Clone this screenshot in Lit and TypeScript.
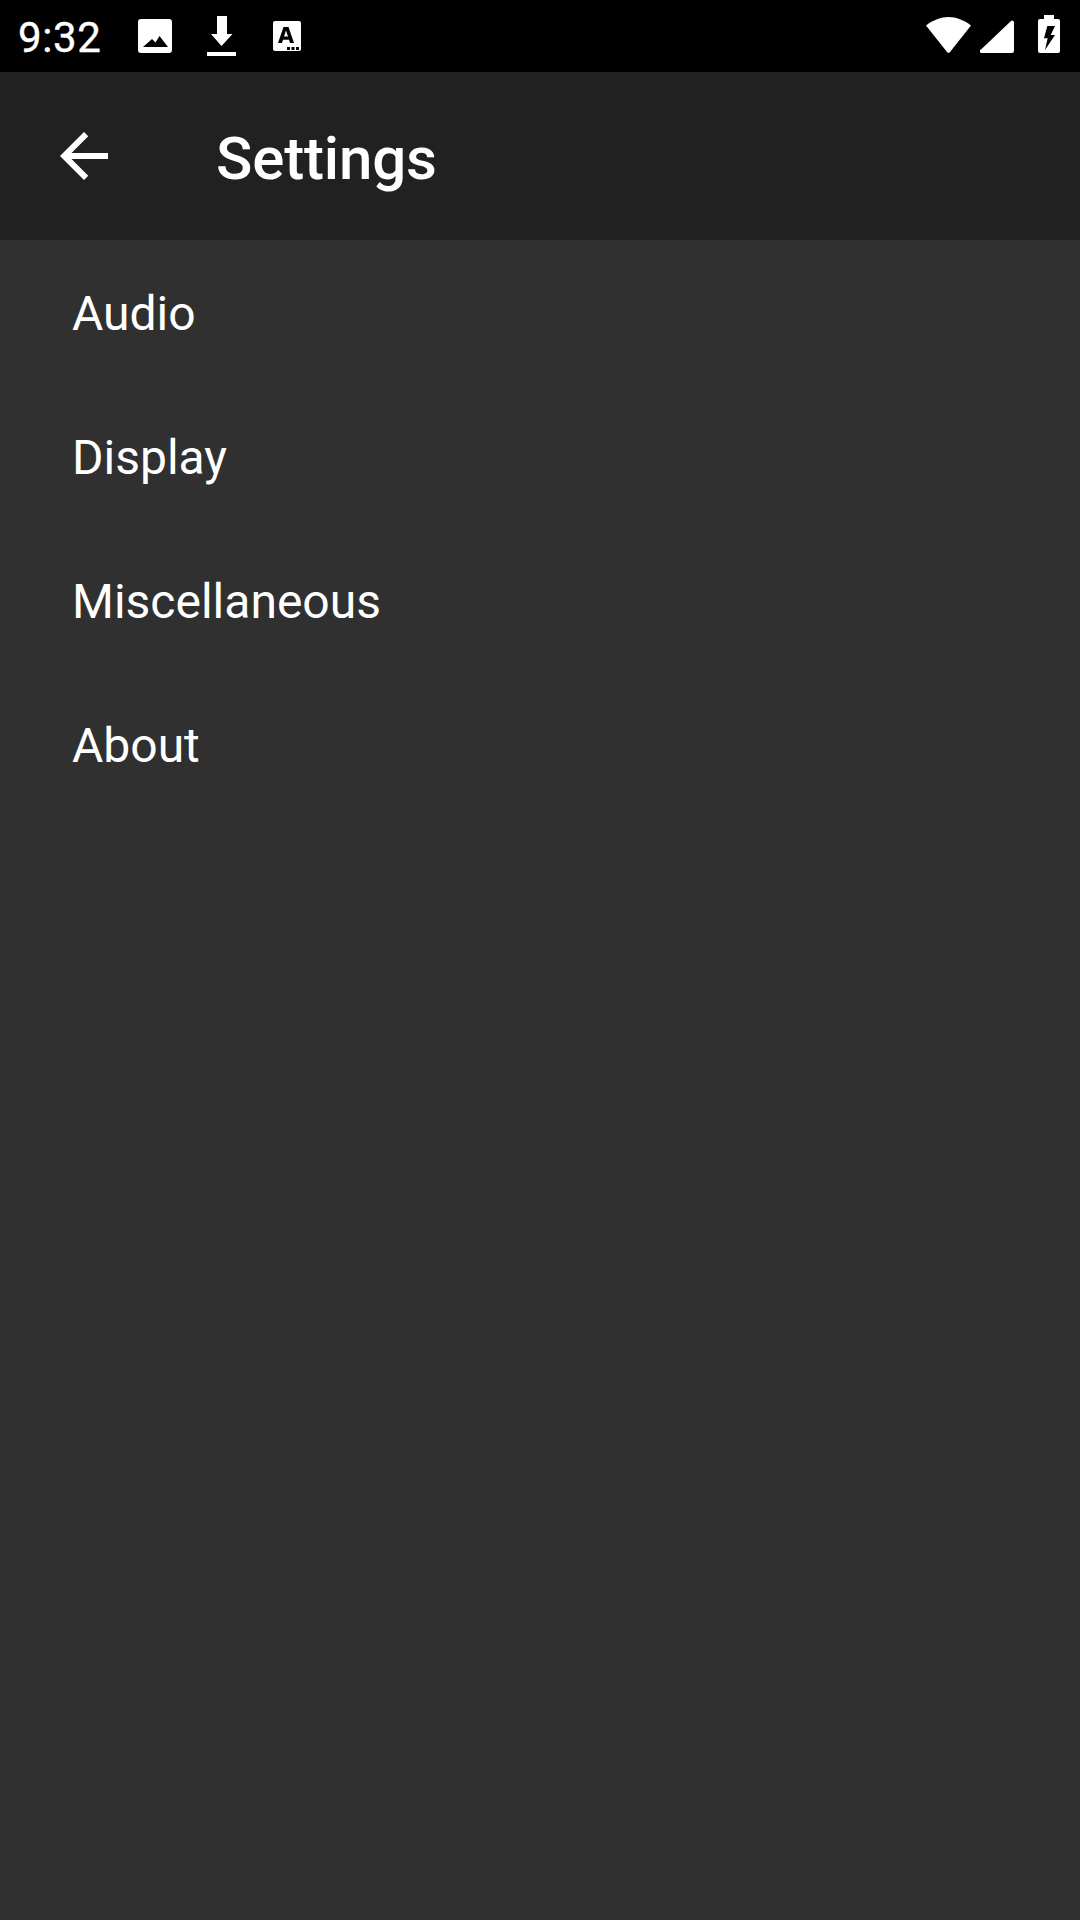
import { LitElement, html, css } from 'lit';
import { customElement } from 'lit/decorators.js';

const items = ['Audio', 'Display', 'Miscellaneous', 'About'];

@customElement('app-root')
export class AppRoot extends LitElement {
  static styles = css`
    :host {
      display: flex;
      flex-direction: column;
      height: 1920px;
      background: #303030;
      color: #fff;
      font-family: Roboto, sans-serif;
    }
    .status {
      height: 72px;
      background: #000;
      display: flex;
      align-items: center;
      flex: none;
    }
    .clock {
      font-size: 42px;
      margin-left: 18px;
      padding-top: 4px;
      width: 102px;
      line-height: 68px;
      letter-spacing: 0.6px;
      -webkit-text-stroke: 0.4px #fff;
    }
    .status svg {
      display: block;
      fill: #fff;
      flex: none;
    }
    .notif {
      display: flex;
      align-items: center;
    }
    .spacer {
      flex: 1;
    }
    .system {
      display: flex;
      align-items: center;
      margin-right: 4px;
    }
    .toolbar {
      height: 168px;
      background: #212121;
      display: flex;
      align-items: center;
      flex: none;
    }
    .back {
      margin-left: 48px;
      width: 72px;
      height: 72px;
      flex: none;
      fill: #fff;
    }
    .title {
      margin-left: 96px;
      padding-top: 5px;
      font-size: 60px;
      font-weight: 500;
      line-height: 72px;
      letter-spacing: -0.15px;
    }
    .row {
      height: 144px;
      box-sizing: border-box;
      padding: 2px 0 0 72px;
      display: flex;
      align-items: center;
      font-size: 48px;
    }
  `;

  render() {
    return html`
      <div class="status">
        <span class="clock">9:32</span>
        <div class="notif">
          <svg width="72" height="72" viewBox="0 0 72 72">
            <path fill-rule="evenodd" d="M21 19h28a3 3 0 0 1 3 3v28a3 3 0 0 1-3 3H21a3 3 0 0 1-3-3V22a3 3 0 0 1 3-3zM23 47l9-8 3.500 3.500L39.500 36 48 47z" />
          </svg>
          <svg width="60" height="72" viewBox="0 0 60 72">
            <path d="M25 16h10v18h5.500L29.500 46 19 34h6zM15 52h29v4H15z" />
          </svg>
          <svg width="72" height="72" viewBox="0 0 72 72">
            <path fill-rule="evenodd" d="M23 21h24a2 2 0 0 1 2 2v26a2 2 0 0 1-2 2H23a2 2 0 0 1-2-2V23a2 2 0 0 1 2-2zM31.500 27 26 43h4l1-3.200h6l1 3.200h4L36.500 27zM32 36.500h4L34 30.500zM35 47h3v3h-3zM39.500 47h3v3h-3zM44 47h3v3h-3z" />
          </svg>
        </div>
        <div class="spacer"></div>
        <div class="system">
          <svg width="60" height="72" viewBox="0 0 60 72">
            <path d="M6 25.500C13 20 21 17 28.500 17S44 20 51 25.500L30 52a2 2 0 0 1-3 0z" />
          </svg>
          <svg width="42" height="72" viewBox="0 0 42 72">
            <path d="M1 49.500 31 21a1.800 1.800 0 0 1 3 1.300V51a2 2 0 0 1-2 2H2a1.800 1.800 0 0 1-1-3.500z" />
          </svg>
          <svg width="54" height="72" viewBox="0 0 54 72">
            <path fill-rule="evenodd" d="M22 15h10v4h4a2 2 0 0 1 2 2v30a2 2 0 0 1-2 2H18a2 2 0 0 1-2-2V21a2 2 0 0 1 2-2h4zM25.300 26H33l-4.300 9H33L23 50l2.700-11.700H22z" />
          </svg>
        </div>
      </div>
      <div class="toolbar">
        <svg class="back" viewBox="0 0 24 24">
          <path d="M20 11H7.830l5.590-5.590L12 4l-8 8 8 8 1.410-1.410L7.830 13H20v-2z" />
        </svg>
        <span class="title">Settings</span>
      </div>
      ${items.map((item) => html`<div class="row">${item}</div>`)}
    `;
  }
}
